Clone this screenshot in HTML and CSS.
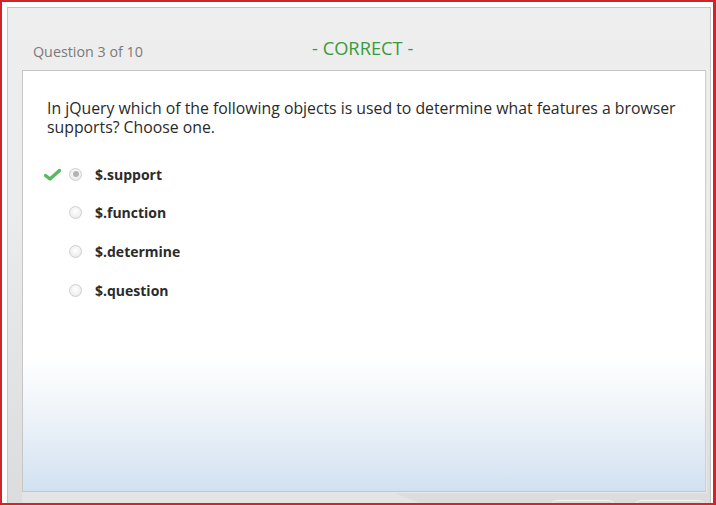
FILE: index.html
```html
<!DOCTYPE html>
<html>
<head>
<meta charset="utf-8">
<link rel="stylesheet" href="styles.css">
</head>
<body>
<div class="frame">
  <div class="panel">
    <div class="header">
      <span class="qnum">Question 3 of 10</span>
      <span class="status">- CORRECT -</span>
    </div>
    <div class="card">
      <p class="question">In jQuery which of the following objects is used to determine what features a browser supports? Choose one.</p>
      <ul class="options">
        <li class="option">
          <span class="mark">
            <svg width="17" height="13" viewBox="0 0 17 13"><path d="M1.5 7.5 L6 11 L15.5 2.5" fill="none" stroke="#5cb860" stroke-width="3.4" stroke-linecap="round" stroke-linejoin="round"/></svg>
          </span>
          <span class="radio selected"></span>
          <span class="label">$.support</span>
        </li>
        <li class="option">
          <span class="mark"></span>
          <span class="radio"></span>
          <span class="label">$.function</span>
        </li>
        <li class="option">
          <span class="mark"></span>
          <span class="radio"></span>
          <span class="label">$.determine</span>
        </li>
        <li class="option">
          <span class="mark"></span>
          <span class="radio"></span>
          <span class="label">$.question</span>
        </li>
      </ul>
    </div>
    <div class="footer">
      <span class="tab"></span>
      <span class="btn"></span>
      <span class="btn btn-wide"></span>
    </div>
  </div>
</div>
</body>
</html>
```

FILE: styles.css
```css
* { box-sizing: border-box; }
html, body { margin: 0; padding: 0; background: #ffffff; }
body {
  width: 716px;
  height: 506px;
  overflow: hidden;
  font-family: "Open Sans", "Noto Sans", sans-serif;
}
.frame {
  width: 716px;
  height: 505px;
  border: 2px solid #d3232a;
  border-right-width: 3px;
  padding: 5px 2px 0 5px;
  background: #ffffff;
}
.panel {
  height: 100%;
  border: 1px solid #c4c4c4;
  border-bottom: none;
  background: linear-gradient(#eeeeee 0%, #ececec 40%, #dcdcdc 100%);
  display: flex;
  flex-direction: column;
  padding: 0 4px 0 14px;
}
.header {
  height: 62px;
  position: relative;
  display: flex;
  align-items: flex-end;
  padding-left: 11px;
  padding-bottom: 10px;
}
.qnum {
  font-size: 14.3px;
  color: #7a7a7a;
  position: relative;
  top: 1px;
}
.status {
  position: absolute;
  left: 290px;
  top: 27px;
  font-size: 18.3px;
  color: #3a9a3e;
}
.card {
  height: 422px;
  border: 1px solid #c6c6c6;
  border-right-color: #d0d0d0;
  box-shadow: 1px 1px 0 #e8e8e8;
  background: linear-gradient(#ffffff 0%, #ffffff 68%, #f1f5fa 80%, #d2e1f1 100%);
  padding: 28px 24px 0 24px;
}
.question {
  margin: 0;
  font-size: 15.8px;
  line-height: 19px;
  color: #2a2a2a;
}
.options {
  list-style: none;
  margin: 27px 0 0 0;
  padding: 0;
  display: flex;
  flex-direction: column;
  gap: 18.7px;
}
.option {
  display: flex;
  align-items: center;
  height: 20px;
}
.mark {
  width: 25px;
  margin-left: -3px;
  display: flex;
  align-items: center;
}
.radio {
  width: 13px;
  height: 13px;
  border-radius: 50%;
  border: 1px solid #cfcfcf;
  background: radial-gradient(circle at 50% 40%, #ffffff 0%, #f0f0f0 60%, #e2e2e2 100%);
  margin-right: 13px;
  display: flex;
  align-items: center;
  justify-content: center;
}
.radio.selected::after {
  content: "";
  width: 6px;
  height: 6px;
  border-radius: 50%;
  background: #b4b4b4;
}
.label {
  font-size: 14px;
  font-weight: bold;
  color: #2b2b2b;
}
.footer {
  flex: 1;
  position: relative;
  overflow: hidden;
}
.tab {
  position: absolute;
  left: 0;
  top: 0;
  width: 400px;
  height: 12px;
  background: #e4e4e4;
  clip-path: polygon(0 0, 370px 0, 400px 12px, 0 12px);
}
.btn {
  position: absolute;
  top: 8px;
  left: 529px;
  width: 64px;
  height: 20px;
  border: 1px solid #f4f4f4;
  border-radius: 6px;
  background: #dcdcdc;
}
.btn-wide {
  left: 613px;
  width: 70px;
}
```
